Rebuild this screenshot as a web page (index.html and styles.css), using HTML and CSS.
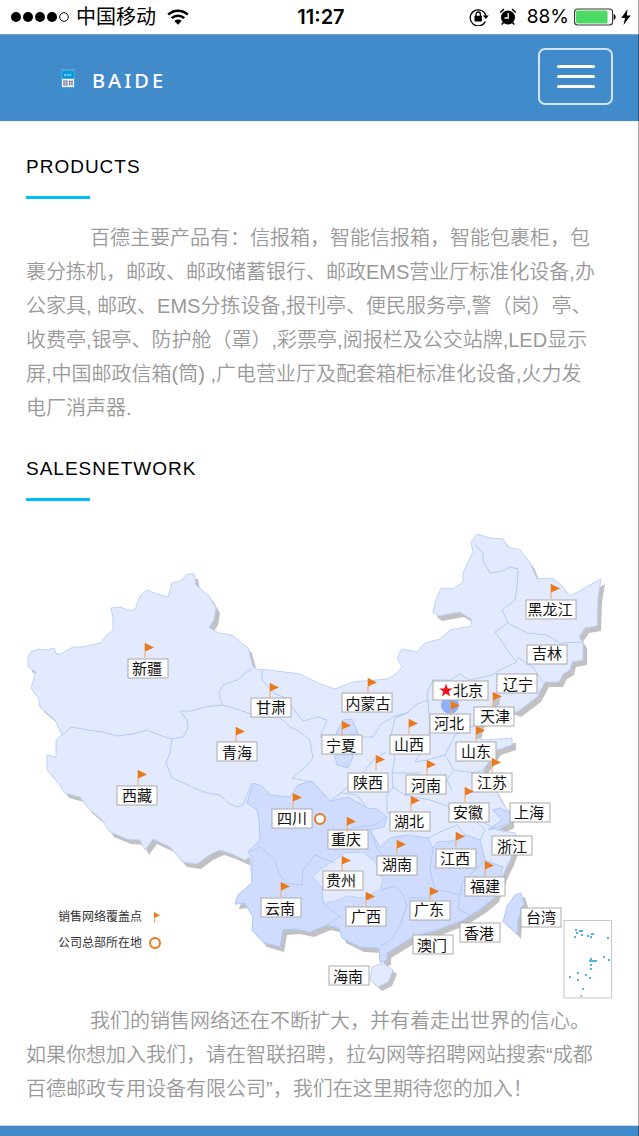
FILE: index.html
```html
<!DOCTYPE html>
<html lang="zh-CN">
<head>
<meta charset="utf-8">
<meta name="viewport" content="width=device-width, initial-scale=1">
<title>BAIDE</title>
<link rel="stylesheet" href="styles.css">
</head>
<body>
<div class="status">
  <div class="status-left">
    <svg class="signal" viewBox="0 0 58 10" aria-hidden="true"><circle cx="5" cy="5" r="5"/><circle cx="17" cy="5" r="5"/><circle cx="29" cy="5" r="5"/><circle cx="41" cy="5" r="5"/><circle cx="53" cy="5" r="4.3" fill="none" stroke="#000" stroke-width="1"/></svg>
    <span class="carrier">中国移动</span>
    <svg class="wifi" viewBox="0 0 22 16" aria-hidden="true"><path d="M1.2 5.6a14.2 14.2 0 0 1 19.6 0M4.7 9.2a9 9 0 0 1 12.6 0" fill="none" stroke="#000" stroke-width="2.5"/><path d="M11 15.8 7.4 12a5.2 5.2 0 0 1 7.2 0z"/></svg>
  </div>
  <time class="clock">11:27</time>
  <div class="status-right">
    <svg class="rotation" viewBox="0 0 20 18" aria-hidden="true"><path d="M16.3 13.6A8 8 0 1 1 17 8" fill="none" stroke="#000" stroke-width="1.3"/><path d="M13.8 7.6h6L16.8 11z"/><rect x="5.5" y="7.8" width="7.4" height="5.6" rx=".6"/><path d="M7 8V6.2a2.2 2.2 0 0 1 4.400 0V8" fill="none" stroke="#000" stroke-width="1.3"/></svg>
    <svg class="alarm" viewBox="0 0 18 18" aria-hidden="true"><circle cx="9" cy="9.500" r="7"/><path d="M1.200 4.500 4.800 1.200M16.800 4.500l-3.600-3.300M4.500 14.500l-1.800 2M13.500 14.500l1.800 2" stroke="#000" stroke-width="1.600"/><path d="M9.200 5v5H5.500" fill="none" stroke="#fff" stroke-width="1.300"/></svg>
    <span class="percent">88%</span>
    <svg class="battery" viewBox="0 0 42 18" aria-hidden="true"><rect x=".6" y="1" width="38" height="16" rx="3" fill="#fff" stroke="#333" stroke-width="1.100"/><rect x="2" y="2.500" width="31.500" height="13" rx="1.500" fill="#4cd964"/><path d="M39.700 6c2.600.8 2.600 5.200 0 6z"/></svg>
    <svg class="bolt" viewBox="0 0 10 16" aria-hidden="true"><path d="M6.500 0 .3 9h3.800L2.500 16 9.700 6.500H5.800z"/></svg>
  </div>
</div>

<header class="navbar">
  <a class="brand" href="#">
    <svg class="brand-mark" viewBox="0 0 24 24" aria-hidden="true"><rect x="5" y="0" width="14" height="19" fill="#48a4da"/><path d="M7 2h10l1 2v5H6V4z" fill="#079bdc"/><path d="M8 6h8" stroke="#6fc8ec" stroke-width="2.200" stroke-dasharray="2 .7"/><rect x="6" y="10" width="12" height="8" fill="#f3f4fa"/><path d="M7.500 12h4M7.500 14h4M7.500 16h4M8 11.500v5M11 11.500v5M13 12.500h4M13 15h4M13.500 11.500v5M16 11.500v5" stroke="#73739b" stroke-width=".9"/><path d="M1 21.500h22" stroke="#299bdb" stroke-width="2" stroke-dasharray="2 1.300"/></svg>
    <span class="brand-name">BAIDE</span>
  </a>
  <button class="menu" type="button" aria-label="菜单"><span class="bar"></span><span class="bar"></span><span class="bar"></span></button>
</header>

<main class="content">
  <section class="section">
    <h2 class="title">PRODUCTS</h2>
    <p class="copy">百德主要产品有：信报箱，智能信报箱，智能包裹柜，包裹分拣机，邮政、邮政储蓄银行、邮政EMS营业厅标准化设备,办公家具, 邮政、EMS分拣设备,报刊亭、便民服务亭,警（岗）亭、收费亭,银亭、防护舱（罩）,彩票亭,阅报栏及公交站牌,LED显示屏,中国邮政信箱(筒) ,广电营业厅及配套箱柜标准化设备,火力发电厂消声器.</p>
  </section>
  <section class="section">
    <h2 class="title">SALESNETWORK</h2>
    <svg class="map" viewBox="26 523 587 481" role="img" aria-label="销售网络地图">
      <defs>
        <path id="land" d="M28 657 31 652 38 649 47 650 54 648 56 654 61 654 73 647 82 647 100 643 105 637 113 630 113 618 111 608 120 607 128 610 135 610 140 596 147 590 157 594 168 597 172 583 182 580 187 574 194 574 196 585 209 596 216 608 214 620 209 628 219 633 232 635 248 648 253 667 257 669 277 671 300 674 318 683 335 689 353 682 387 679 396 674 402 667 397 658 402 649 417 652 425 643 440 639 450 630 472 626 471 619 460 612 438 616 433 612 436 600 441 588 453 589 463 582 463 573 473 552 471 542 477 534 490 538 503 539 508 547 520 550 530 563 537 579 552 578 561 585 570 596 590 585 601 579 598 597 597 626 585 628 579 637 583 643 583 660 572 662 570 670 563 674 559 682 545 682 537 697 517 712 499 706 500 698 494 700 491 714 480 723 476 738 485 740 512 738 512 745 497 750 488 763 483 770 497 793 502 802 510 813 510 823 497 830 515 833 518 838 510 860 503 875 495 897 483 907 463 920 437 930 413 937 400 945 387 953 387 960 380 962 379 948 360 947 342 938 339 928 327 925 310 932 296 929 283 930 280 947 263 942 252 930 253 917 245 903 235 904 238 895 252 883 250 857 245 860 232 854 220 850 209 855 197 864 183 862 170 847 153 839 145 850 140 840 127 839 110 832 102 820 88 808 80 797 65 793 56 780 47 770 47 755 56 757 56 740 62 735 55 720 40 707 39 699 31 688 36 672 28 667Z"/>
        <path id="taiwan" d="M507 906 515 895 521 893 524 903 518 920 517 935 510 927 503 922Z"/>
        <path id="hainan" d="M372 967 383 963 393 970 388 982 378 987 370 980Z"/>
        <g id="flag"><path d="M0 0V15" stroke="#f0a860" stroke-width="1"/><path d="M0 0 9 4.500 0 8.500Z" fill="#e8791c"/></g>
        <rect id="tag" width="40" height="19" class="tag"/>
        <rect id="tag-wide" width="50" height="19" class="tag"/>
      </defs>
      <g class="shade"><use href="#land" x="4" y="5"/><use href="#taiwan" x="4" y="4"/><use href="#hainan" x="4" y="4"/></g>
      <g class="land"><use href="#land"/></g>
      <g class="region">
        <path d="M252 857 248 852 260 840 259 820 257 810 247 803 253 783 262 786 270 795 290 797 298 785 312 781 323 793 330 801 348 797 367 808 377 809 387 817 384 827 370 830 380 847 390 838 407 835 428 838 433 848 437 842 452 841 467 835 480 840 485 860 503 867 495 897 483 907 463 920 437 930 413 937 400 945 387 953 387 960 380 962 379 948 360 947 342 938 339 928 327 925 310 932 296 929 283 930 280 947 263 942 252 930 253 917 245 903 235 904 238 895 252 883Z"/>
        <path d="M343 720 352 719 357 732 350 742 353 757 348 768 337 765 335 757 341 746 334 738Z"/>
        <path d="M493 810 500 808 510 813 510 823 499 827 488 830 502 820Z"/>
        <use href="#taiwan"/>
      </g>
      <g class="land"><path d="M345 853 363 852 375 862 383 880 380 890 363 898 348 896 335 901 323 903 322 887 313 877 320 870Z"/><use href="#hainan"/></g>
      <ellipse cx="450" cy="705" rx="9" ry="9" fill="#8fb0fa"/>
      <path class="border" d="M252 668 237 680 223 685 219 693 222 705 205 707 192 711 180 711 187 720 188 728 183 737 172 739 159 735 147 730 132 734 117 736 103 732 88 730 72 727 62 735M172 739 170 753 166 763 172 778 192 787 207 793 220 795 228 803 237 807 243 805 252 783M222 705 230 707 245 712 260 717 280 718 290 727 297 730 310 740 313 758 305 767 292 778 312 782M262 670 262 680 275 694 287 698 295 711 303 721 318 717 327 720 320 737 330 740M353 723 360 737 373 737 381 724 395 716 407 713 417 704 428 700 427 693 433 680 450 680 460 674 469 680 480 678 492 675 500 670 517 662 508 651 503 643 495 632 508 623 502 610 515 600 517 587 518 569 510 567 503 571 490 573 483 561 483 553 475 545M508 623 527 633 547 635 560 643 582 642M517 657 533 667 543 682M407 713 395 718 390 740 395 758 392 773 420 773M392 773 393 787 387 795 387 813 402 814 430 812M330 801 341 793 357 795 367 808M340 793 360 777 374 759 386 752M393 787 405 795 430 800 447 806 460 818 480 820 497 830M428 700 430 730 424 747 415 762M480 723 455 735 445 755 427 760 415 762M445 755 454 770 447 780 452 790M454 770 475 773 483 770M465 835 457 825 440 832 428 838M475 820 485 830 480 840M248 852 260 847 275 860 278 871 285 883 302 885 303 870 315 855 335 863M322 887 323 903 340 917 327 925M380 890 395 886 402 893 407 905 400 925 393 938 380 947M433 848 430 870 435 890 428 898 407 898M435 890 450 892 460 895 462 882 470 875 485 860M460 895 458 909 470 915M387 817 375 825 352 828 350 840 335 851M370 829 377 848 385 858"/>
      <g class="tags">
        <g><use href="#tag" x="128" y="659"/><use href="#tag" x="251" y="698"/><use href="#tag-wide" x="342" y="693"/><use href="#tag" x="322" y="735"/><use href="#tag" x="390" y="735"/><use href="#tag" x="217" y="742"/><use href="#tag" x="348" y="773"/><use href="#tag" x="117" y="786"/><use href="#tag" x="406" y="775"/><use href="#tag" x="272" y="809"/><use href="#tag" x="390" y="812"/><use href="#tag" x="328" y="830"/><use href="#tag" x="377" y="856"/><use href="#tag" x="323" y="871"/><use href="#tag" x="261" y="898"/><use href="#tag" x="346" y="907"/><use href="#tag" x="329" y="966"/><use href="#tag-wide" x="526" y="600"/><use href="#tag" x="527" y="645"/><use href="#tag" x="497" y="674"/><rect class="tag" x="433" y="681" width="55" height="19"/><use href="#tag" x="430" y="714"/><use href="#tag" x="474" y="707"/><use href="#tag" x="456" y="742"/><use href="#tag" x="472" y="773"/><use href="#tag" x="449" y="803"/><use href="#tag" x="510" y="803"/><use href="#tag" x="492" y="836"/><use href="#tag" x="436" y="849"/><use href="#tag" x="465" y="877"/><use href="#tag" x="410" y="901"/><use href="#tag" x="413" y="935"/><use href="#tag" x="460" y="923"/><use href="#tag" x="521" y="908"/></g>
        <g class="names"><text x="147" y="674">新疆</text><text x="271" y="713">甘肃</text><text x="368" y="709">内蒙古</text><text x="341" y="751">宁夏</text><text x="409" y="750">山西</text><text x="237" y="758">青海</text><text x="368" y="788">陕西</text><text x="137" y="801">西藏</text><text x="426" y="791">河南</text><text x="292" y="824">四川</text><text x="409" y="827">湖北</text><text x="346" y="845">重庆</text><text x="397" y="870">湖南</text><text x="341" y="886">贵州</text><text x="280" y="914">云南</text><text x="366" y="922">广西</text><text x="348" y="982">海南</text><text x="550" y="615">黑龙江</text><text x="547" y="659">吉林</text><text x="518" y="690">辽宁</text><text x="468" y="696">北京</text><text x="449" y="729">河北</text><text x="495" y="722">天津</text><text x="476" y="757">山东</text><text x="492" y="788">江苏</text><text x="468" y="818">安徽</text><text x="529" y="818">上海</text><text x="512" y="852">浙江</text><text x="455" y="864">江西</text><text x="485" y="892">福建</text><text x="429" y="915">广东</text><text x="432" y="951">澳门</text><text x="479" y="939">香港</text><text x="541" y="923">台湾</text></g>
      </g>
      <g><use href="#flag" x="145" y="643"/><use href="#flag" x="270" y="683"/><use href="#flag" x="368" y="678"/><use href="#flag" x="342" y="721"/><use href="#flag" x="409" y="719"/><use href="#flag" x="376" y="755"/><use href="#flag" x="427" y="760"/><use href="#flag" x="293" y="793"/><use href="#flag" x="411" y="796"/><use href="#flag" x="347" y="817"/><use href="#flag" x="397" y="840"/><use href="#flag" x="342" y="856"/><use href="#flag" x="281" y="882"/><use href="#flag" x="366" y="892"/><use href="#flag" x="551" y="584"/><use href="#flag" x="451" y="701"/><use href="#flag" x="493" y="692"/><use href="#flag" x="476" y="726"/><use href="#flag" x="492" y="758"/><use href="#flag" x="465" y="787"/><use href="#flag" x="456" y="832"/><use href="#flag" x="485" y="861"/><use href="#flag" x="430" y="887"/><use href="#flag" x="138" y="770"/><use href="#flag" x="236" y="727"/></g>
      <path d="M446 683.500 447.700 688.500H452.800L448.700 691.600 450.200 696.600 446 693.600 441.800 696.600 443.300 691.600 439.200 688.500H444.300Z" fill="#f5101c"/>
      <circle class="office" cx="320" cy="819" r="5"/>
      <g class="legend"><text x="58" y="921">销售网络覆盖点</text><text x="58" y="947">公司总部所在地</text></g>
      <path d="M154.500 912V923" stroke="#f0a860"/><path d="M154 912 160 915.500 154 918Z" fill="#e8791c"/>
      <circle class="office" cx="155" cy="943" r="5"/>
      <rect x="564" y="920.500" width="47.500" height="77.500" fill="#fff" stroke="#c8c8c8"/>
      <path class="isles" d="M575 930h2M579 931h4M576 933h2M581 935h2M574 937h2M587 936h2M591 934h3M590 937h2M607 938h2M603 957h2M608 960h2M590 959h2M589 961h8M590 965h2M590 969h2M577 973h2M585 975h2M569 977h2M577 980h2M589 978h2M582 989h2"/>
      <path d="M580 996h3" stroke="#999" stroke-width="1"/>
    </svg>
    <p class="copy">我们的销售网络还在不断扩大，并有着走出世界的信心。如果你想加入我们，请在智联招聘，拉勾网等招聘网站搜索“成都百德邮政专用设备有限公司”，我们在这里期待您的加入！</p>
  </section>
</main>
<footer class="footer"></footer>
</body>
</html>
```
FILE: styles.css
```css
* { box-sizing: border-box; }

body {
  position: relative;
  margin: 0;
  background: #fff;
  color: #000;
  font-family: "Liberation Sans", "Noto Sans CJK SC", sans-serif;
}

/* Hairline along the right edge of the viewport, above every band */
body::after {
  content: "";
  position: absolute;
  top: 0;
  right: 0;
  bottom: 0;
  width: 1px;
  background: rgba(0, 0, 0, 0.35);
}

svg { display: block; flex: none; }

.status {
  display: grid;
  grid-template-columns: 1fr auto 1fr;
  align-items: center;
  height: 34px;
  padding: 0 8px 0 11px;
}

.status-left,
.status-right {
  display: flex;
  align-items: center;
}

.status-right { justify-content: flex-end; }

.signal { width: 58px; height: 10px; }
.carrier { margin: 0 11px 0 7px; font-size: 20px; line-height: 34px; }
.wifi { width: 22px; height: 16px; }
.clock { font: 600 20px/34px Inter, sans-serif; }
.rotation { width: 20px; height: 18px; }
.alarm { width: 18px; height: 18px; margin: 0 10px; }
.percent { font: 400 19px/34px Inter, sans-serif; }
.battery { width: 42px; height: 18px; margin: 0 5px; }
.bolt { width: 10px; height: 16px; }

.navbar {
  display: flex;
  justify-content: space-between;
  align-items: flex-start;
  padding: 13px 26px 16px 56px;
  border-top: 1px solid #6aa4d6;
  background: #428bca;
}

.brand {
  display: flex;
  align-items: center;
  gap: 12px;
  padding-top: 20px;
  color: #fff;
  text-decoration: none;
}

.brand-mark { width: 24px; height: 24px; }

.brand-name {
  font: 500 20px/26px "Noto Sans", sans-serif;
  letter-spacing: 3px;
}

.menu {
  display: flex;
  flex-direction: column;
  justify-content: center;
  align-items: center;
  gap: 7px;
  width: 75px;
  height: 57px;
  padding: 0;
  border: 2px solid #d3e3f2;
  border-radius: 7px;
  background: transparent;
}

.bar {
  width: 38px;
  height: 3px;
  border-radius: 2px;
  background: #fff;
}

.content { padding: 31px 26px 19px; }
.section + .section { margin-top: 29px; }

.title {
  margin: 0 0 22px;
  font-size: 19px;
  font-weight: 400;
  line-height: 30px;
  letter-spacing: 1px;
}

.title::after {
  content: "";
  display: block;
  width: 64px;
  height: 3px;
  margin-top: 14px;
  background: #00bcff;
}

.copy {
  margin: 0;
  padding-right: 15px;
  color: #999;
  font-size: 20px;
  font-weight: 350;
  line-height: 34px;
  text-indent: 64px;
}

.map { width: 100%; height: auto; }
.shade { fill: #c1c1c3; }
.land { fill: #e3eafe; stroke: #bdd2fb; stroke-width: 1; }
.region { fill: #cfdcfe; stroke: #b0c9fb; stroke-width: 1; }
.border { fill: none; stroke: #b0cbfb; stroke-width: 1; stroke-linejoin: round; }
.tag { fill: #fff; stroke: #aaa; stroke-width: 1; }

.names {
  fill: #111;
  font-family: "Noto Sans CJK SC", sans-serif;
  font-size: 15px;
  text-anchor: middle;
}

.legend {
  fill: #333;
  font-family: "Noto Sans CJK SC", sans-serif;
  font-size: 12px;
}

.office { fill: #fff; stroke: #e8791c; stroke-width: 2; }
.isles { fill: none; stroke: #55b2dc; stroke-width: 2; }

.footer {
  height: 11px;
  border-top: 1px solid #c3daee;
  background: #428bca;
}
```
